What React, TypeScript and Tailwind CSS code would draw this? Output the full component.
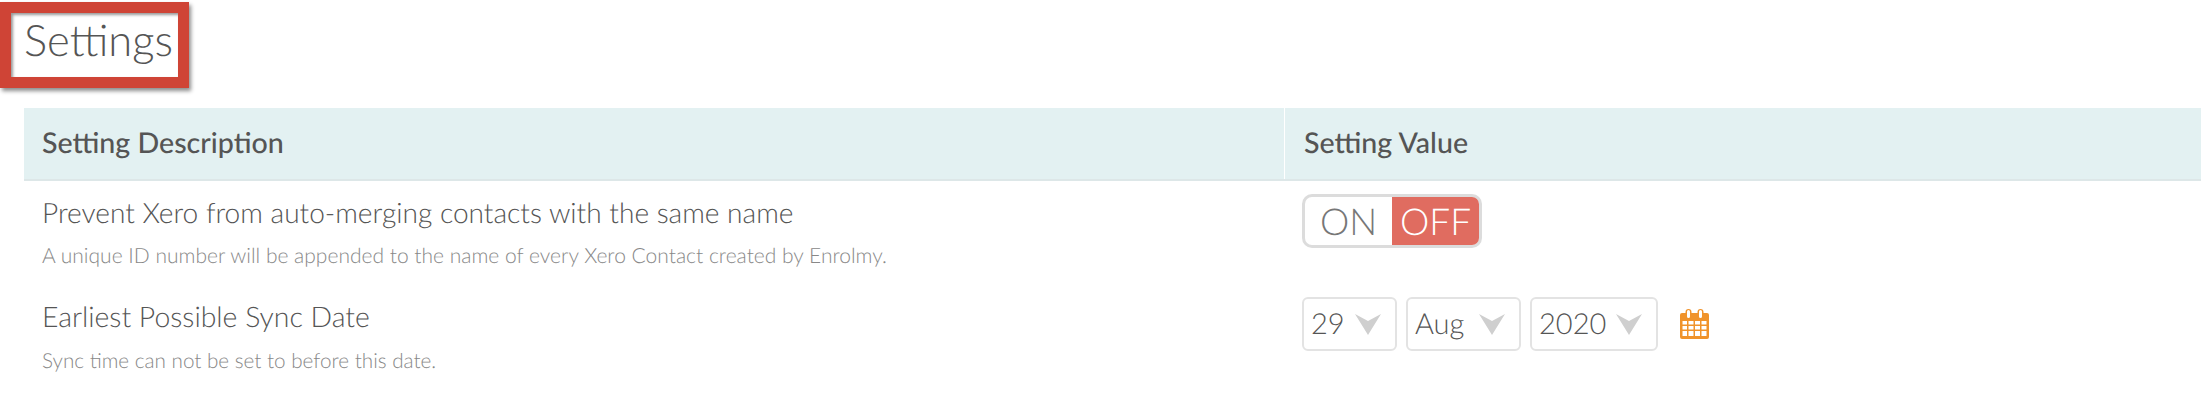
import React from "react";

function Chevron() {
  return (
    <svg width="26" height="22" viewBox="0 0 26 22" className="shrink-0">
      <path d="M0 1 L13 8 L26 1 L13 22 Z" fill="#cfcfcf" />
    </svg>
  );
}

function CalendarIcon() {
  return (
    <svg width="29" height="30" viewBox="0 0 29 30">
      <path
        fillRule="evenodd"
        fill="#f0932b"
        d="M2 4h3.5V3a3 3 0 0 1 6 0v1h6V3a3 3 0 0 1 6 0v1H27a2 2 0 0 1 2 2v22a2 2 0 0 1-2 2H2a2 2 0 0 1-2-2V6a2 2 0 0 1 2-2ZM7 2.500v5a1.500 1.500 0 0 0 3 0v-5a1.500 1.500 0 0 0-3 0ZM19 2.500v5a1.500 1.500 0 0 0 3 0v-5a1.500 1.500 0 0 0-3 0ZM2.500 12v3.500h4.500V12ZM8.500 12v3.500h5V12ZM15 12v3.500h5V12ZM21.500 12v3.500h5V12ZM2.500 17v3.500h4.500V17ZM8.500 17v3.500h5V17ZM15 17v3.500h5V17ZM21.500 17v3.500h5V17ZM2.500 22v5h4.500v-5ZM8.500 22v5h5v-5ZM15 22v5h5v-5ZM21.500 22v5h5v-5Z"
      />
    </svg>
  );
}

function DateSelect({ label, width }: { label: string; width: string }) {
  return (
    <div
      className={`${width} flex h-[54px] items-center justify-between rounded-[6px] border-2 border-[#e3e3e3] pl-[7px] pr-[14px] text-[29px] font-light text-[#555]`}
    >
      <span>{label}</span>
      <Chevron />
    </div>
  );
}

export default function App() {
  return (
    <div
      className="relative h-[419px] w-full overflow-hidden bg-white text-[#555] [text-rendering:geometricPrecision]"
      style={{ fontFamily: "Lato, 'Open Sans', sans-serif" }}
    >
      {/* red annotation round the title */}
      <div className="absolute left-0 top-[2px] h-[86px] w-[189px] border-[11px] border-[#cf4436] shadow-[2px_3px_4px_rgba(0,0,0,0.45),inset_2px_2px_3px_rgba(0,0,0,0.4)]" />

      <div className="pl-6">
        <h1 className="flex h-[108px] items-start pt-[12px] text-[43.5px] font-light leading-[56px] text-[#555]">
          Settings
        </h1>

        <div className="grid grid-cols-[1260px_1fr] border-b-2 border-[#dde7e8] bg-[#e3f1f2]">
          <div className="flex h-[71px] items-center pl-[18px] text-[28.6px] font-medium text-[#555]">
            Setting Description
          </div>
          <div className="flex h-[71px] items-center border-l border-white pl-[19px] text-[28.6px] font-medium text-[#555]">
            Setting Value
          </div>
        </div>

        <div className="grid grid-cols-[1260px_1fr]">
          <div className="h-[104px] pl-[18px] pt-[10px]">
            <div className="text-[28.1px] font-light leading-[42px] text-[#555]">
              Prevent Xero from auto-merging contacts with the same name
            </div>
            <div className="mt-[11px] text-[21px] font-light leading-[24px] text-[#888]">
              A unique ID number will be appended to the name of every Xero Contact created by Enrolmy.
            </div>
          </div>
          <div className="pl-[18px] pt-[13px]">
            <div className="flex h-[54px] w-[180px] overflow-hidden rounded-[10px] border-[3px] border-[#dcdcdc] text-[37px] font-light">
              <div className="flex w-[87px] items-center justify-center text-[#777]">ON</div>
              <div className="flex flex-1 items-center justify-center bg-[#e06c60] text-white">OFF</div>
            </div>
          </div>
        </div>

        <div className="grid grid-cols-[1260px_1fr]">
          <div className="pl-[18px] pt-[11px]">
            <div className="text-[28.4px] font-light leading-[42px] text-[#555]">
              Earliest Possible Sync Date
            </div>
            <div className="mt-[11px] text-[20.7px] font-light leading-[24px] text-[#888]">
              Sync time can not be set to before this date.
            </div>
          </div>
          <div className="flex items-start pl-[18px] pt-[12px]">
            <div className="flex items-center gap-[9px]">
              <DateSelect label="29" width="w-[95px]" />
              <DateSelect label="Aug" width="w-[115px]" />
              <DateSelect label="2020" width="w-[128px]" />
            </div>
            <div className="ml-[22px] mt-[12px]">
              <CalendarIcon />
            </div>
          </div>
        </div>
      </div>
    </div>
  );
}
